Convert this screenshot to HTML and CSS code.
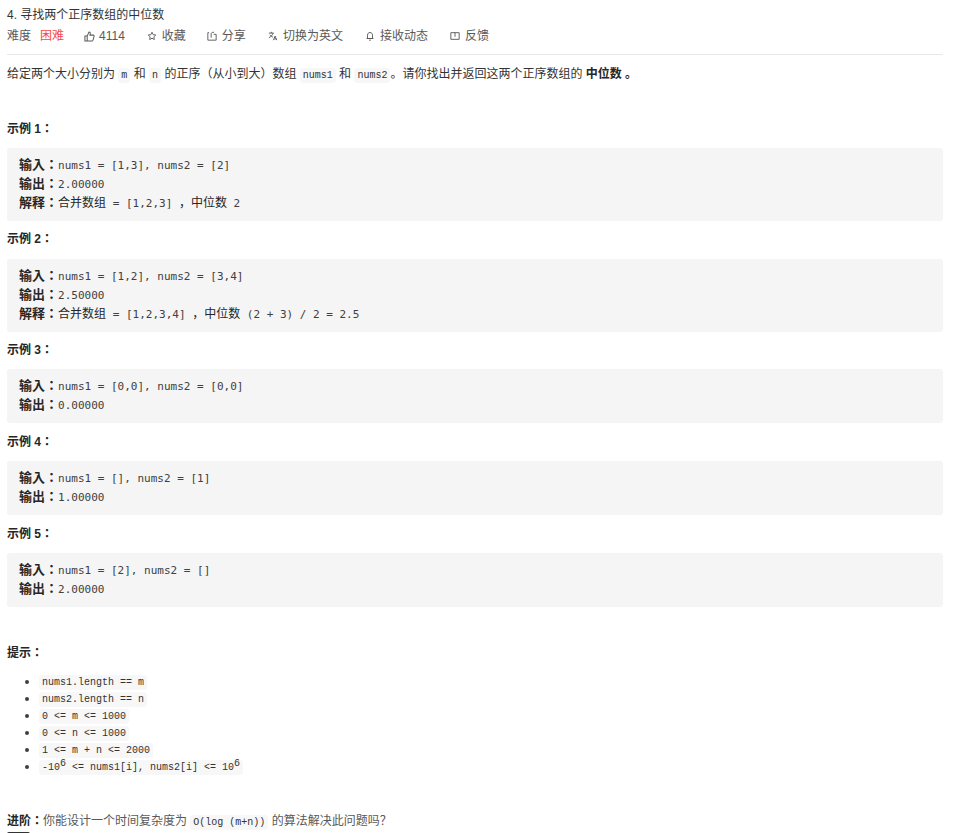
FILE: index.html
```html
<!DOCTYPE html>
<html>
<head>
<meta charset="utf-8">
<title>寻找两个正序数组的中位数</title>
<link rel="stylesheet" href="styles.css">
</head>
<body>
<header class="head">
  <div class="title">4. 寻找两个正序数组的中位数</div>
  <div class="meta">
    <span class="item diff">难度<b class="hard">困难</b></span>
    <span class="item like"><svg class="ic" viewBox="0 0 12 12"><path d="M1 5.500h2.500v5.500H1zM3.500 5.500l2-4.500c1 0 1.500.7 1.300 1.700L6.500 4.500h3.500c.8 0 1.200.7 1 1.300l-1.200 4.200c-.2.600-.6 1-1.200 1H3.500"/></svg>4114</span>
    <span class="item fav"><svg class="ic" viewBox="0 0 12 12"><path d="M6 1.500l1.400 2.900 3.100.4-2.300 2.200.6 3.200L6 8.700l-2.800 1.500.6-3.200-2.300-2.200 3.100-.4z"/></svg>收藏</span>
    <span class="item share"><svg class="ic" viewBox="0 0 12 12"><path d="M2.500 2H1v9h10V4H8M5 8V3.500C5 2 6 1.500 8.500 1.500"/></svg>分享</span>
    <span class="item lang"><svg class="ic" viewBox="0 0 12 12"><path d="M1 2.500h6M4 1v1.500M6 2.500C5.500 5 3.500 7 1 8M2.500 4.500C3.500 6 4.500 7 6 7.500M6.500 11l2-5 2 5M7.200 9.500h2.600"/></svg>切换为英文</span>
    <span class="item notify"><svg class="ic" viewBox="0 0 12 12"><path d="M3 9V5C3 3 4.300 1.800 6 1.800S9 3 9 5v4zM1.800 9h8.400M5 11h2"/></svg>接收动态</span>
    <span class="item feedback"><svg class="ic" viewBox="0 0 12 12"><path d="M1 2h10v8H1zM6 2v5"/></svg>反馈</span>
  </div>
</header>
<main class="content">
  <p class="intro">给定两个大小分别为 <code>m</code> 和 <code>n</code> 的正序（从小到大）数组 <code>nums1</code> 和 <code>nums2</code>。请你找出并返回这两个正序数组的 <strong>中位数 。</strong></p>

  <p class="ex-title first"><strong>示例 1：</strong></p>
  <pre class="ex"><strong>输入：</strong>nums1 = [1,3], nums2 = [2]
<strong>输出：</strong>2.00000
<strong>解释：</strong><span class="cn">合并数组</span> = [1,2,3] <span class="cn">，中位数</span> 2</pre>

  <p class="ex-title"><strong>示例 2：</strong></p>
  <pre class="ex"><strong>输入：</strong>nums1 = [1,2], nums2 = [3,4]
<strong>输出：</strong>2.50000
<strong>解释：</strong><span class="cn">合并数组</span> = [1,2,3,4] <span class="cn">，中位数</span> (2 + 3) / 2 = 2.5</pre>

  <p class="ex-title third"><strong>示例 3：</strong></p>
  <pre class="ex"><strong>输入：</strong>nums1 = [0,0], nums2 = [0,0]
<strong>输出：</strong>0.00000</pre>

  <p class="ex-title short"><strong>示例 4：</strong></p>
  <pre class="ex"><strong>输入：</strong>nums1 = [], nums2 = [1]
<strong>输出：</strong>1.00000</pre>

  <p class="ex-title short"><strong>示例 5：</strong></p>
  <pre class="ex"><strong>输入：</strong>nums1 = [2], nums2 = []
<strong>输出：</strong>2.00000</pre>

  <p class="hint-title"><strong>提示：</strong></p>
  <ul class="hints">
    <li><code>nums1.length == m</code></li>
    <li><code>nums2.length == n</code></li>
    <li><code>0 &lt;= m &lt;= 1000</code></li>
    <li><code>0 &lt;= n &lt;= 1000</code></li>
    <li><code>1 &lt;= m + n &lt;= 2000</code></li>
    <li><code>-10<sup>6</sup> &lt;= nums1[i], nums2[i] &lt;= 10<sup>6</sup></code></li>
  </ul>
  <p class="advance"><strong>进阶：</strong>你能设计一个时间复杂度为 <code>O(log (m+n))</code> 的算法解决此问题吗？</p>
  <div class="tab-edge"></div>
</main>
</body>
</html>
```
FILE: styles.css
```css
html, body { margin: 0; padding: 0; background: #fff; overflow: hidden; }
body {
  width: 953px;
  height: 833px;
  padding: 0 10px 0 7px;
  box-sizing: border-box;
  font-family: "Liberation Sans", "Noto Sans CJK SC", sans-serif;
  font-size: 12px;
  line-height: 19px;
  color: #404040;
}
.head { height: 55px; box-sizing: border-box; border-bottom: 1px solid #e8e8e8; }
.title { padding-top: 6px; height: 19px; line-height: 18px; color: #333; }
.meta { display: flex; align-items: center; height: 22px; color: #595959; }
.item { display: inline-flex; align-items: center; }
.ic { width: 10px; height: 10px; margin-right: 5px; fill: none; stroke: #595959; stroke-width: 1.100; }
.hard { font-weight: normal; color: #f5474a; margin-left: 9px; }
.like { margin-left: 20px; }
.fav, .lang, .notify, .feedback { margin-left: 22px; }
.share { margin-left: 21px; }
.like .ic { width: 11px; height: 11px; margin-right: 4px; }
.content { display: block; }
.content p { margin: 0; }
.intro { padding-top: 10px; color: #333; }
code {
  font-family: "Liberation Mono", "DejaVu Sans Mono", monospace;
  font-size: 10px;
  background: #f7f7f7;
  border-radius: 3px;
  padding: 2px 3px;
  color: #333;
}
strong { font-weight: 700; color: #262626; }
.ex-title strong, .hint-title strong, .advance strong {
  font-family: "Liberation Sans", "Noto Sans CJK JP", sans-serif;
}
.content .ex-title { height: 19px; margin: 9px 0 10px; }
.content .ex-title.first { margin: 35px 0 9px; }
.content .ex-title.third { margin: 9px 0 9px; }
.content .ex-title.short { margin: 10px 0 9px; }
.ex {
  margin: 0;
  padding: 8px 12px;
  background: #f5f5f5;
  border-radius: 3px;
  font-family: "DejaVu Sans Mono", "Liberation Mono", "Noto Sans CJK SC", monospace;
  font-size: 11px;
  line-height: 19px;
  color: #404040;
}
.ex strong { font-family: "Liberation Sans", "Noto Sans CJK JP", sans-serif; font-size: 13px; line-height: 1; }
.ex .cn { font-family: "Noto Sans CJK SC", sans-serif; font-size: 12px; line-height: 1; color: #262626; }
.content .hint-title { margin-top: 37px; }
.hints { margin: 10px 0 0; padding: 0 0 0 32px; }
.hints li { line-height: 17px; height: 17px; }
.hints sup { font-size: 10px; line-height: 0; vertical-align: 4px; }
.content .advance { margin-top: 37px; color: #595959; }
.tab-edge { width: 23px; height: 2px; background: #333; border-radius: 2px 2px 0 0; }
```
